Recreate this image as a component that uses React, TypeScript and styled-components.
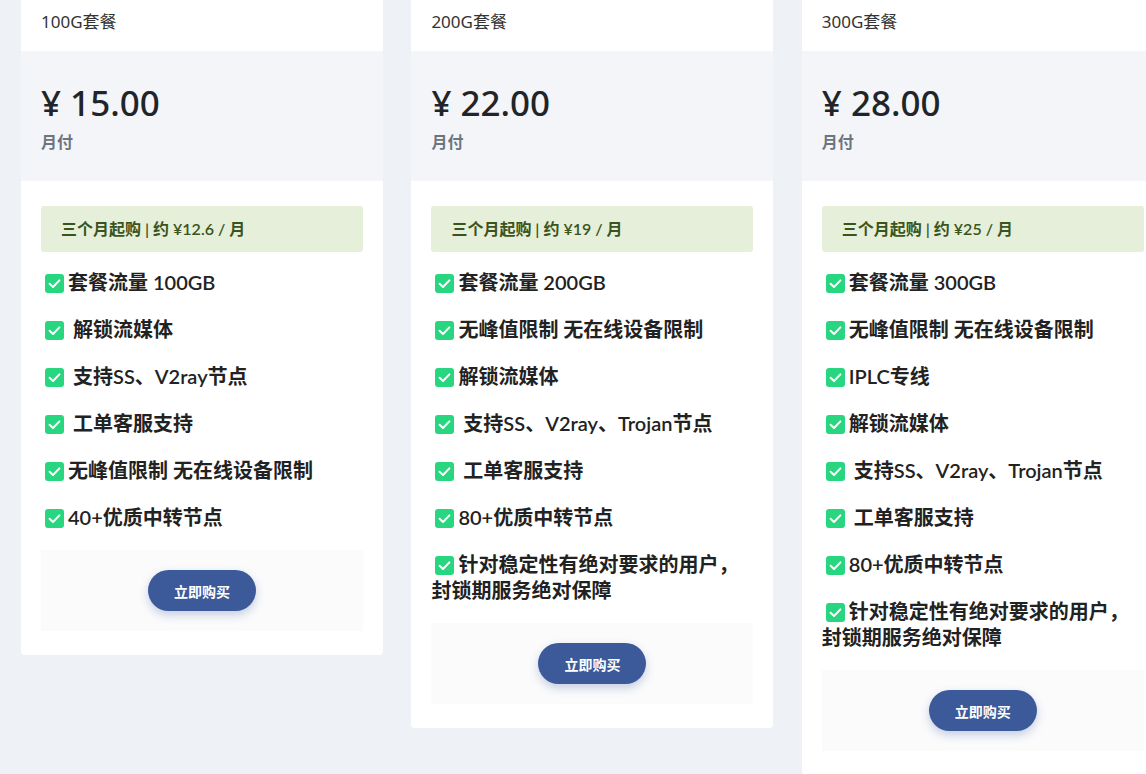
import React from "react";
import styled, { createGlobalStyle } from "styled-components";

const Global = createGlobalStyle`
  html, body {
    margin: 0;
    padding: 0;
    overflow: hidden;
    background: #eef1f6;
  }
  body {
    font-family: "Noto Sans", "Noto Sans CJK SC", sans-serif;
    color: #222;
  }
`;

const Grid = styled.div`
  display: grid;
  grid-template-columns: repeat(3, 362px);
  column-gap: 28.4px;
  align-items: start;
  padding-left: 21px;
  margin-top: -6px;
  width: max-content;
`;

const Card = styled.div`
  background: #fff;
  border-radius: 4px;
  overflow: hidden;
  display: flex;
  flex-direction: column;
`;

const Header = styled.div`
  padding: 16px 20px 17px;
  font-size: 17px;
  line-height: 24px;
  color: #333;
`;

const PriceBox = styled.div`
  background: #f4f5f9;
  padding: 31px 20px 27px;
  display: flex;
  flex-direction: column;
  gap: 6px;
`;

const Price = styled.div`
  font-size: 35px;
  line-height: 42px;
  font-weight: 500;
  color: #212529;
`;

const Period = styled.div`
  font-size: 16px;
  line-height: 24px;
  font-weight: 700;
  color: #6c757d;
`;

const Body = styled.div`
  padding: 25px 20px 24px;
  display: flex;
  flex-direction: column;
`;

const Promo = styled.div`
  background: #e6efd9;
  color: #3a5420;
  border-radius: 3px;
  padding: 12px 20px;
  font-family: "Lato", "Noto Sans CJK SC", sans-serif;
  font-size: 16px;
  line-height: 22px;
  font-weight: 600;
  margin-bottom: 17px;
`;

const FeatureList = styled.ul`
  list-style: none;
  margin: 0;
  padding: 0;
  display: flex;
  flex-direction: column;
  gap: 21px;
`;

const Feature = styled.li`
  font-family: "Lato", "Noto Sans CJK SC", sans-serif;
  font-size: 20px;
  line-height: 26px;
  font-weight: 600;
  color: #222;
  white-space: pre-wrap;
`;

const Check = styled.svg`
  display: inline-block;
  width: 19px;
  height: 19px;
  vertical-align: -3px;
  margin: 0 4px 0 4px;
`;

const Footer = styled.div`
  margin-top: 20px;
  background: #fbfbfc;
  padding: 20px;
  display: flex;
  justify-content: center;
`;

const BuyButton = styled.button`
  border: none;
  width: 108px;
  height: 41px;
  border-radius: 21px;
  background: #3c5a99;
  color: #fff;
  font-family: "Noto Sans", "Noto Sans CJK SC", sans-serif;
  font-size: 14px;
  font-weight: 700;
  box-shadow: 0 4px 10px rgba(60, 90, 153, 0.28);
  cursor: pointer;
`;

const CheckIcon = () => (
  <Check viewBox="0 0 19 19">
    <rect x="0" y="0" width="19" height="19" rx="3" fill="#28d680" />
    <path
      d="M4.6 9.8 L8 13 L14.4 6.4"
      fill="none"
      stroke="#fff"
      strokeWidth="2"
      strokeLinecap="round"
      strokeLinejoin="round"
    />
  </Check>
);

type Plan = {
  name: string;
  price: string;
  promo: string;
  features: React.ReactNode[];
};

const longItem = (
  <>
    针对稳定性有绝对要求的用户，
    <br />
    封锁期服务绝对保障
  </>
);

const plans: Plan[] = [
  {
    name: "100G套餐",
    price: "¥ 15.00",
    promo: "三个月起购 | 约 ¥12.6 / 月",
    features: [
      "套餐流量 100GB",
      " 解锁流媒体",
      " 支持SS、V2ray节点",
      " 工单客服支持",
      "无峰值限制 无在线设备限制",
      "40+优质中转节点",
    ],
  },
  {
    name: "200G套餐",
    price: "¥ 22.00",
    promo: "三个月起购 | 约 ¥19 / 月",
    features: [
      "套餐流量 200GB",
      "无峰值限制 无在线设备限制",
      "解锁流媒体",
      " 支持SS、V2ray、Trojan节点",
      " 工单客服支持",
      "80+优质中转节点",
      longItem,
    ],
  },
  {
    name: "300G套餐",
    price: "¥ 28.00",
    promo: "三个月起购 | 约 ¥25 / 月",
    features: [
      "套餐流量 300GB",
      "无峰值限制 无在线设备限制",
      "IPLC专线",
      "解锁流媒体",
      " 支持SS、V2ray、Trojan节点",
      " 工单客服支持",
      "80+优质中转节点",
      longItem,
    ],
  },
];

export default function App() {
  return (
    <>
      <Global />
      <Grid>
        {plans.map((p) => (
          <Card key={p.name}>
            <Header>{p.name}</Header>
            <PriceBox>
              <Price>{p.price}</Price>
              <Period>月付</Period>
            </PriceBox>
            <Body>
              <Promo>{p.promo}</Promo>
              <FeatureList>
                {p.features.map((f, i) => (
                  <Feature key={i}>
                    <CheckIcon />
                    {f}
                  </Feature>
                ))}
              </FeatureList>
              <Footer>
                <BuyButton>立即购买</BuyButton>
              </Footer>
            </Body>
          </Card>
        ))}
      </Grid>
    </>
  );
}
